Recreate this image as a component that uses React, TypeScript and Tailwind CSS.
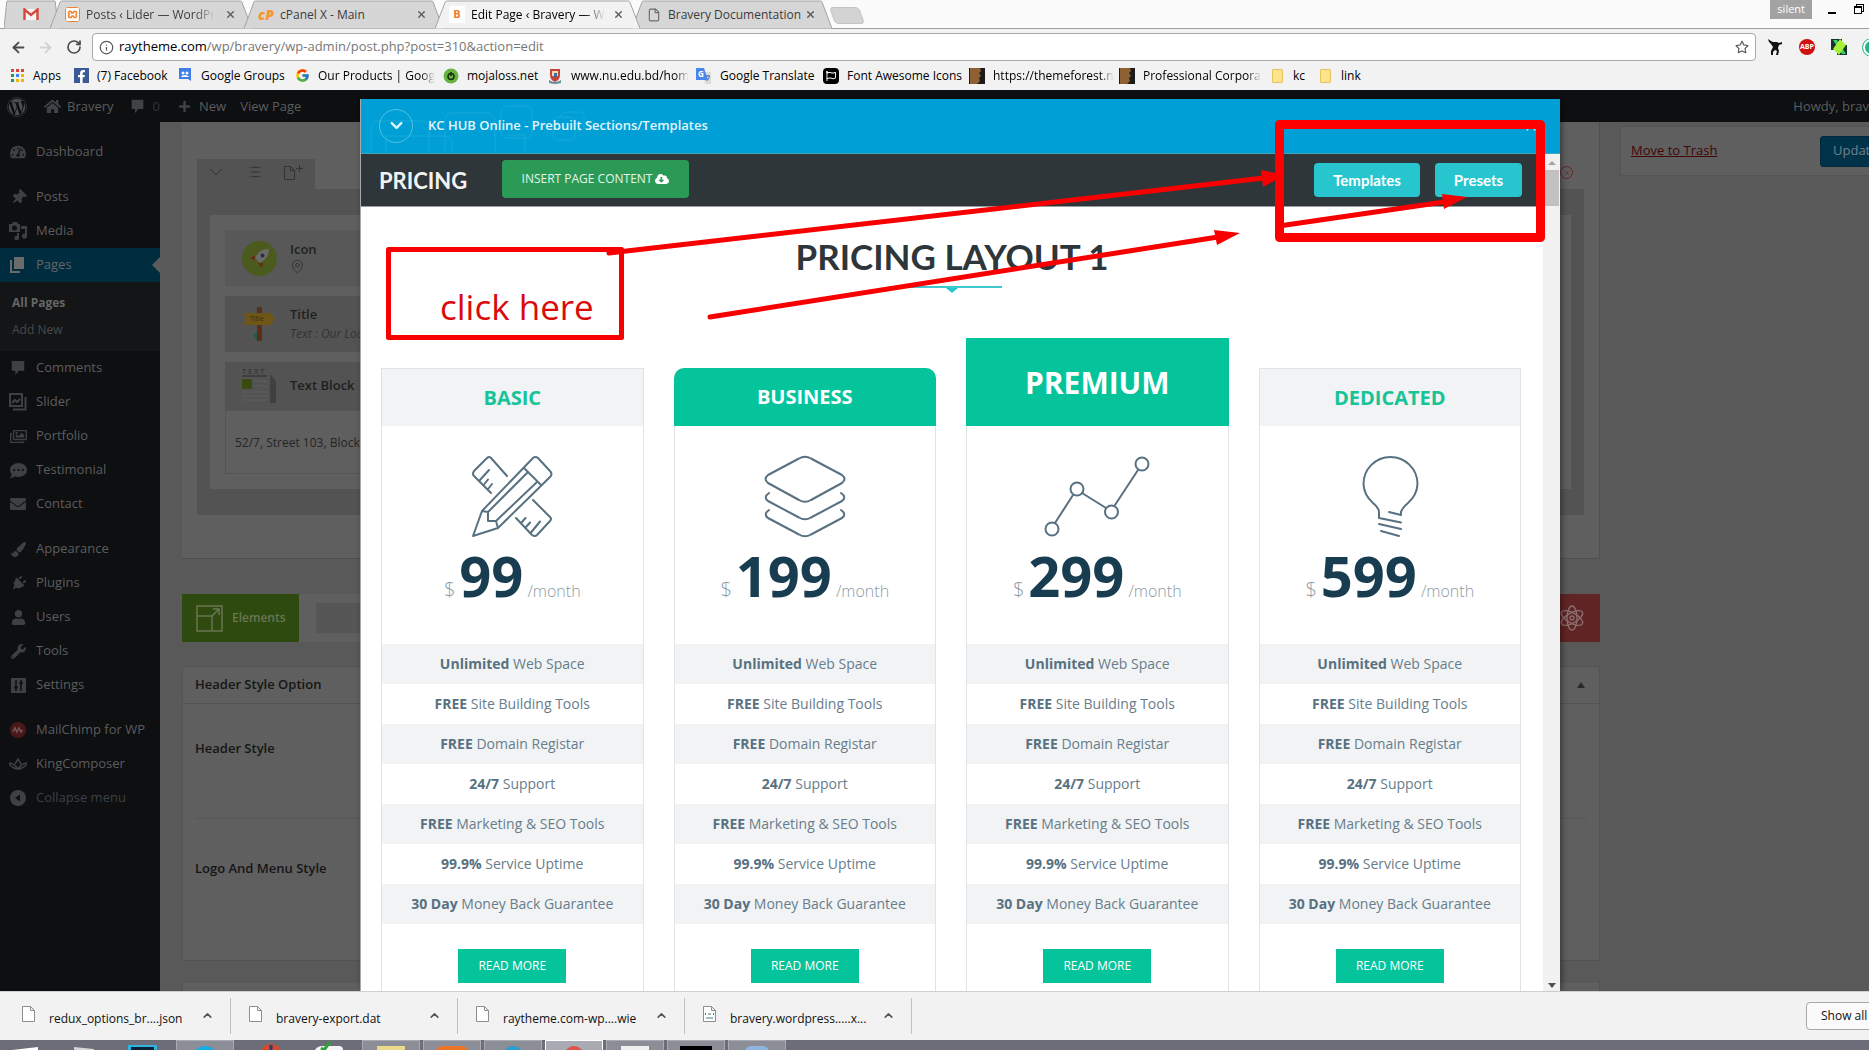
import React from "react";
import {
  FaWordpress,
  FaHome,
  FaPlus,
  FaTachometerAlt,
  FaThumbtack,
  FaWrench,
  FaPlug,
  FaUser,
  FaEnvelope,
  FaPaintBrush,
  FaFacebookF,
  FaCloudDownloadAlt,
  FaRegStar,
  FaCommentDots,
  FaRegImages,
  FaRegFlag,
} from "react-icons/fa";
import { SiXampp } from "react-icons/si";
import { FcGoogle } from "react-icons/fc";
import { ArrowLeft, ArrowRight, RotateCw, Info, ChevronDown, ChevronUp, List, X, File, MapPin } from "lucide-react";

/* ---------- browser chrome ---------- */

function TabShape({ active }: { active?: boolean }) {
  return (
    <svg className="absolute inset-0 h-full w-full" viewBox="0 0 100 29" preserveAspectRatio="none" aria-hidden="true">
      <path
        d="M0 28.5 L5 2 Q5.300 1 6 1 H94 Q94.700 1 95 2 L100 28.500"
        fill={active ? "#f2f2f2" : "#d6d6d6"}
        stroke="#a3a3a3"
        vectorEffect="non-scaling-stroke"
      />
    </svg>
  );
}

function BrowserTab({ icon, label, active, fade, width }: { icon: React.ReactNode; label: string; active?: boolean; fade?: boolean; width: string }) {
  return (
    <div className={`relative h-[29px] -mr-2 ${width} ${active ? "z-10" : ""}`}>
      <TabShape active={active} />
      <div className="relative flex h-full items-center pr-4 pl-[14px]">
        <span className="flex w-4 shrink-0 justify-center">{icon}</span>
        <a
          href="#tab"
          className={`ml-[6px] text-[12px] whitespace-nowrap ${active ? "text-black" : "text-[#3c3c3c]"} ${fade ? "[mask-image:linear-gradient(to_right,black_85%,transparent)]" : ""}`}
        >
          {label}
        </a>
        <button aria-label="Close tab" className="ml-auto shrink-0">
          <X size={11} strokeWidth={3} className="text-[#5a5a5a]" />
        </button>
      </div>
    </div>
  );
}

function TabStrip() {
  return (
    <div className="flex h-[29px] items-start border-b border-[#a0a0a0] bg-[#fbfbfb] pl-1">
      <div className="relative -mr-2 h-[29px] w-[54px]">
        <TabShape />
        <a href="#gmail" aria-label="Gmail" className="relative flex h-full items-center justify-center">
          <svg width="16" height="13" viewBox="0 0 16 13">
            <rect x="1" y="1" width="14" height="11" fill="#f4f4f4" />
            <path d="M1.500 12V1.500L8 7l6.500-5.500V12" fill="none" stroke="#d9473c" strokeWidth="2.400" />
          </svg>
        </a>
      </div>
      <BrowserTab width="w-[202px]" fade label="Posts ‹ Lider — WordPr" icon={<span className="rounded-sm bg-[#ee8433] p-px text-white"><SiXampp size={13} /></span>} />
      <BrowserTab width="w-[199px]" label="cPanel X - Main" icon={<span className="text-[14px] font-extrabold text-[#f79533] italic">cP</span>} />
      <BrowserTab width="w-[205px]" active fade label="Edit Page ‹ Bravery — W" icon={<span className="w-4 bg-white text-center text-[11px] font-bold text-[#f0792e]">B</span>} />
      <BrowserTab width="w-[200px]" label="Bravery Documentation" icon={<File size={14} className="text-[#6c6c6c]" />} />
      <button aria-label="New tab" className="mt-[7px] ml-2 h-[17px] w-[30px] skew-x-[20deg] rounded-sm border border-[#c4c4c4] bg-[#d3d3d3]" />
      <div className="ml-auto flex items-start">
        <span className="h-[19px] bg-[#a3a3a3] px-[7px] text-[11px] leading-[18px] text-white">silent</span>
        <button aria-label="Minimize" className="mt-3 ml-4 h-[2px] w-2 bg-black" />
        <button aria-label="Restore" className="relative mt-1 mr-[5px] ml-[18px] h-[10px] w-[10px]">
          <span className="absolute top-0 right-0 h-2 w-2 border border-black" />
          <span className="absolute bottom-0 left-0 h-2 w-2 border border-t-2 border-black bg-[#fbfbfb]" />
        </button>
      </div>
    </div>
  );
}

function AddressBar() {
  return (
    <div className="flex h-[33px] items-center bg-[#f2f2f2] pt-[3px]">
      <button aria-label="Back" className="ml-[10px] text-[#4a4a4a]"><ArrowLeft size={17} strokeWidth={2.500} /></button>
      <button aria-label="Forward" className="ml-[10px] text-[#d2d2d2]"><ArrowRight size={17} strokeWidth={2.500} /></button>
      <button aria-label="Reload" className="ml-3 text-[#4a4a4a]"><RotateCw size={16} strokeWidth={2.500} /></button>
      <div className="ml-[10px] flex h-[28px] flex-1 items-center gap-[5px] rounded-sm border border-[#a9a9a9] bg-white px-[6px]">
        <Info size={15} className="text-[#5a5a5a]" />
        <a href="#address" className="flex-1 text-[13px] text-[#777]">
          <span className="text-black">raytheme.com</span>/wp/bravery/wp-admin/post.php?post=310&amp;action=edit
        </a>
        <FaRegStar size={14} className="text-[#5a5a5a]" />
      </div>
      <div className="ml-[11px] flex w-[102px] items-center gap-4 overflow-hidden">
        <svg width="16" height="16" viewBox="0 0 16 16" className="shrink-0">
          <path d="M1 0l3 2 2 1 4 0 2 1 3-1v2l-3 1-1 3 1 3-1 4H9l1-4-2-1-2 2 0 3H4l0-4 2-4L4 5 2 3z" fill="#111" />
        </svg>
        <span className="flex size-4 shrink-0 items-center justify-center rounded-full bg-[#cf0f0f] text-[7px] font-bold text-white">ABP</span>
        <svg width="16" height="16" viewBox="0 0 16 16" className="shrink-0">
          <path d="M0 0h11v11H0zM6 6h10v10H6z" fill="#12372a" />
          <path d="M2 1h4l9 14h-4z" fill="#3ccf6b" />
          <path d="M9 0l6 6-7 10-6-6z" fill="#a6ef3a" />
        </svg>
        <span className="size-[17px] shrink-0 rounded-full border-2 border-white bg-[#24b47e] outline outline-[#24b47e]" />
      </div>
    </div>
  );
}

function AppsGrid() {
  const colors = ["#db4437", "#db4437", "#db4437", "#1f9d58", "#4285f4", "#f4b400", "#1f9d58", "#f4b400", "#f4b400"];
  return (
    <span className="grid grid-cols-3 gap-[2px]">
      {colors.map((c, i) => (
        <span key={i} className="size-[3px]" style={{ background: c }} />
      ))}
    </span>
  );
}

function Thumb() {
  return (
    <svg width="16" height="16" viewBox="0 0 16 16">
      <rect width="16" height="16" fill="#1c1a1a" />
      <path d="M1 0h10l1 3-2 2 2 3-2 2 1 3-3 3H1z" fill="#8d6132" />
    </svg>
  );
}

function Folder() {
  return <span className="block h-[14px] w-[11px] rounded-[1px] border border-[#e5c260] bg-[#ffe28c]" />;
}

const bookmarks: { label: string; icon: React.ReactNode; w: string; fade?: boolean }[] = [
  { label: "Apps", icon: <AppsGrid />, w: "w-[64px]" },
  { label: "(7) Facebook", icon: <span className="flex size-[15px] items-end justify-center bg-[#3b5998] text-white"><FaFacebookF size={13} /></span>, w: "w-[104px]" },
  {
    label: "Google Groups",
    icon: (
      <svg width="14" height="15" viewBox="0 0 14 15"><path d="M1 0h12v13l-3-2H1z" fill="#3f7de8" /><circle cx="5" cy="5" r="1.500" fill="#fff" /><circle cx="9" cy="5" r="1.500" fill="#fff" /><path d="M2.500 9q4.500-4 9 0z" fill="#fff" /></svg>
    ),
    w: "w-[117px]",
  },
  { label: "Our Products | Goog", icon: <FcGoogle size={15} />, w: "w-[149px]", fade: true },
  {
    label: "mojaloss.net",
    icon: (
      <svg width="16" height="16" viewBox="0 0 16 16"><circle cx="8" cy="8" r="7.500" fill="#68b442" /><circle cx="8" cy="8.500" r="3" fill="none" stroke="#18310d" strokeWidth="1.500" /><path d="M8 4v4" stroke="#18310d" strokeWidth="1.500" /></svg>
    ),
    w: "w-[104px]",
  },
  {
    label: "www.nu.edu.bd/hom",
    icon: (
      <svg width="14" height="16" viewBox="0 0 14 16"><path d="M2 1h10v6q0 5-5 7-5-2-5-7z" fill="#c4443c" /><path d="M4 3h6v5H4z" fill="#eed9b0" /><path d="M6 5h3v4H6z" fill="#3d6f9c" /><path d="M1 12q6 4 12 0v3q-6 2-12 0z" fill="#6d8f9c" /></svg>
    ),
    w: "w-[149px]",
    fade: true,
  },
  {
    label: "Google Translate",
    icon: (
      <svg width="16" height="16" viewBox="0 0 16 16"><path d="M6 4h9v12H9z" fill="#dcdcdc" /><path d="M0 0h8l4 12H0z" fill="#4a86ec" /><text x="2" y="9" fontSize="8" fontWeight="700" fill="#fff">G</text><path d="M10 8h4M12 7v1M13.500 8q-1 4-3 5" stroke="#4a6fb0" fill="none" /></svg>
    ),
    w: "w-[127px]",
  },
  { label: "Font Awesome Icons", icon: <span className="rounded-sm bg-black p-[3px] text-white"><FaRegFlag size={10} /></span>, w: "w-[146px]" },
  { label: "https://themeforest.n", icon: <Thumb />, w: "w-[150px]", fade: true },
  { label: "Professional Corpora", icon: <Thumb />, w: "w-[150px]", fade: true },
  { label: "kc", icon: <Folder />, w: "w-[48px]" },
  { label: "link", icon: <Folder />, w: "w-[60px]" },
];

function BookmarksBar() {
  return (
    <div className="flex h-[28px] items-center bg-[#f2f2f2] pb-px pl-[9px]">
      {bookmarks.map((b) => (
        <a key={b.label} href="#bookmark" className={`flex items-center gap-2 text-[12px] text-black ${b.w}`}>
          <span className="flex w-4 shrink-0 justify-center">{b.icon}</span>
          <span className={`whitespace-nowrap ${b.fade ? "[mask-image:linear-gradient(to_right,black_88%,transparent)]" : ""}`}>{b.label}</span>
        </a>
      ))}
    </div>
  );
}

/* ---------- WordPress admin ---------- */

function CommentIcon({ size = 15 }: { size?: number }) {
  return (
    <svg width={size} height={size} viewBox="0 0 16 18" fill="currentColor"><path d="M1 1h14v11H9l-4 5v-5H1z" /></svg>
  );
}

function AdminBar() {
  return (
    <header className="flex h-8 shrink-0 items-center bg-[#0d0f11] pt-px text-[13px] text-[#5c5d5e]">
      <FaWordpress size={20} className="ml-[7px] text-[#4a4d50]" />
      <FaHome size={17} className="ml-[17px] text-[#3f4246]" />
      <a href="#site" className="ml-[6px]">Bravery</a>
      <span className="ml-4 text-[#3f4246]"><CommentIcon /></span>
      <a href="#comments" className="ml-2 text-[#333639]">0</a>
      <FaPlus size={13} className="ml-[18px] text-[#3f4246]" />
      <a href="#new" className="ml-2">New</a>
      <a href="#view" className="ml-[14px]">View Page</a>
      <a href="#me" className="ml-auto whitespace-nowrap">Howdy, brav</a>
    </header>
  );
}

const ic = {
  media: <svg width="18" height="18" viewBox="0 0 18 18" fill="currentColor"><path fillRule="evenodd" d="M0 2h3l1-2h4l1 2h2v8H0zM5.500 3.500a2.500 2.500 0 100 5 2.500 2.500 0 000-5z" /><path d="M12 4h6v10a2.500 2.500 0 11-2-2.300V7h-4zM10 11v5a2.300 2.300 0 11-2-2.300V11z" /></svg>,
  pages: <svg width="16" height="18" viewBox="0 0 16 18"><path d="M1 4v12h9" fill="none" stroke="#6b6b6b" strokeWidth="2" /><rect x="4" y="1" width="10" height="12" fill="#6b6b6b" /></svg>,
  slider: <svg width="18" height="18" viewBox="0 0 18 18" fill="none" stroke="currentColor" strokeWidth="2"><rect x="1" y="1" width="12" height="12" /><path d="M4 16.500h12.500V4M3 10l3-3 2 2 3-3" /></svg>,
  settings: <svg width="15" height="15" viewBox="0 0 15 15"><rect width="15" height="15" fill="currentColor" /><path d="M5 2v11M3 9.500h4M10 2v11M8 5h4" stroke="#0d0f11" strokeWidth="1.500" /></svg>,
  mail: <svg width="16" height="16" viewBox="0 0 16 16"><circle cx="8" cy="8" r="8" fill="#4c1719" /><path d="M3 10l2-4 2 4 2-4 2 4 1.500-2" fill="none" stroke="#70585a" strokeWidth="1.500" /></svg>,
  king: <svg width="18" height="12" viewBox="0 0 18 12" fill="none" stroke="currentColor" strokeWidth="1.500"><path d="M0 5q2 5 9 6 7-1 9-6-5 0-9 6Q5 5 0 5zM6 6l3-5 3 5" /></svg>,
  collapse: <svg width="16" height="16" viewBox="0 0 16 16"><circle cx="8" cy="8" r="8" fill="currentColor" /><path d="M10 4.500v7L5 8z" fill="#0d0f11" /></svg>,
};

type Item = { label: string; icon: React.ReactNode; gap?: boolean };
const menuTop: Item[] = [
  { label: "Dashboard", icon: <FaTachometerAlt size={16} /> },
  { label: "Posts", icon: <FaThumbtack size={15} className="rotate-45" />, gap: true },
  { label: "Media", icon: ic.media },
];
const menuBottom: Item[] = [
  { label: "Comments", icon: <CommentIcon size={16} /> },
  { label: "Slider", icon: ic.slider },
  { label: "Portfolio", icon: <FaRegImages size={17} /> },
  { label: "Testimonial", icon: <FaCommentDots size={17} /> },
  { label: "Contact", icon: <FaEnvelope size={16} /> },
  { label: "Appearance", icon: <FaPaintBrush size={15} />, gap: true },
  { label: "Plugins", icon: <FaPlug size={15} className="rotate-45" /> },
  { label: "Users", icon: <FaUser size={15} /> },
  { label: "Tools", icon: <FaWrench size={15} /> },
  { label: "Settings", icon: ic.settings },
  { label: "MailChimp for WP", icon: ic.mail, gap: true },
  { label: "KingComposer", icon: ic.king },
];

function MenuLink({ item }: { item: Item }) {
  return (
    <a href="#menu" className={`flex h-[34px] items-center text-[13px] whitespace-nowrap text-[#5c5d5e] ${item.gap ? "mt-[11px]" : ""}`}>
      <span className="flex w-9 shrink-0 justify-center text-[#3e4144]">{item.icon}</span>
      {item.label}
    </a>
  );
}

function Sidebar() {
  return (
    <nav className="w-[160px] shrink-0 bg-[#0d0f11] pt-[13px]">
      {menuTop.map((m) => <MenuLink key={m.label} item={m} />)}
      <a href="#pages" className="relative flex h-[34px] items-center bg-[#002c40] text-[13px] text-[#666]">
        <span className="flex w-9 justify-center">{ic.pages}</span>
        Pages
        <span className="absolute top-[9px] right-0 border-y-8 border-r-8 border-y-transparent border-r-[#5b5b5b]" />
      </a>
      <div className="flex h-[69px] flex-col justify-center gap-[7px] bg-[#131517] pl-3 text-[12px] leading-5">
        <a href="#all" className="font-bold text-[#666]">All Pages</a>
        <a href="#add" className="text-[#484a4c]">Add New</a>
      </div>
      {menuBottom.map((m) => <MenuLink key={m.label} item={m} />)}
      <button className="flex h-[34px] items-center text-[13px] text-[#3e4144]">
        <span className="flex w-9 justify-center">{ic.collapse}</span>
        Collapse menu
      </button>
    </nav>
  );
}

function EditorPanel() {
  return (
    <section className="h-[437px] border-r border-b border-[#4f4f4f] bg-[#5f5f5f] px-[15px] pt-[37px]">
      <div className="flex h-[30px] w-[118px] items-center justify-between bg-[#535353] px-3 pb-1 text-[#333]">
        <svg width="14" height="8" viewBox="0 0 14 8" fill="none" stroke="currentColor"><path d="M1 1l6 6 6-6" /></svg>
        <List size={16} strokeWidth={1.500} />
        <svg width="19" height="15" viewBox="0 0 19 15" fill="none" stroke="currentColor"><path d="M.500 1.500h6l4 4v9H.500zM6.500 1.500v4h4M15.500 0v7M12 3.500h7" /></svg>
      </div>
      <div className="relative bg-[#535353] px-[13px] py-[26px]">
        <span className="absolute -top-[23px] right-[11px] flex size-[13px] items-center justify-center rounded-full border border-[#6a2327] text-[#6a2327]"><X size={8} /></span>
        <div className="h-[274px] bg-[#5f5f5f] px-[15px] pt-[15px] text-[#1f1f1f]">
          <article className="flex h-[56px] items-center gap-[13px] bg-[#585858] pl-[17px]">
            <svg width="35" height="35" viewBox="0 0 35 35">
              <circle cx="17.500" cy="17.500" r="17.500" fill="#4b5a1d" />
              <path d="M27 8q-9-1-14 9l5 5q9-5 9-14z" fill="#6b6b6b" />
              <path d="M13 14l-5 3 5 2zM16 22l5 0-1 5z" fill="#642b1c" />
              <circle cx="20.500" cy="14.500" r="2" fill="#24303d" />
            </svg>
            <div className="flex flex-col pb-[3px]">
              <h3 className="text-[13px] leading-5 font-semibold">Icon</h3>
              <MapPin size={15} strokeWidth={1.500} className="text-[#333]" />
            </div>
          </article>
          <article className="mt-[10px] flex h-[56px] items-center gap-[13px] bg-[#535353] pl-[17px]">
            <svg width="35" height="35" viewBox="0 0 35 35">
              <rect x="15" y="0" width="5" height="34" fill="#5a2f17" />
              <path d="M1 6h28l4 6-4 6H1l3-6z" fill="#6e5618" />
              <path d="M11 28l4-2v8z" fill="#1c5a4a" />
              <text x="8" y="14" fontSize="7" fill="#3b2e10">Title</text>
            </svg>
            <div>
              <h3 className="text-[13px] leading-5 font-semibold">Title</h3>
              <p className="text-[12px] leading-5 whitespace-nowrap text-[#333] italic">Text : Our Loc</p>
            </div>
          </article>
          <article className="mt-[10px] flex h-[48px] items-center gap-[13px] bg-[#535353] pl-[17px]">
            <svg width="35" height="38" viewBox="0 0 35 38">
              <text x="0" y="7" fontSize="8" letterSpacing="1.500" fill="#2c2c2c">TEXT</text>
              <path d="M0 9h25" stroke="#2c2c2c" />
              <rect x="0" y="12" width="10" height="10" fill="#3a4b12" />
              <path d="M12 14h13M12 19h13M0 25h25M0 29h25M0 33h25" stroke="#5e5e5e" />
              <path d="M28 7l6 7v22h-6z" fill="#404040" />
            </svg>
            <h3 className="text-[13px] font-semibold">Text Block</h3>
          </article>
          <p className="h-[64px] w-full border border-[#555] pt-[23px] pl-[9px] text-[12px] text-[#252525]">52/7, Street 103, Block</p>
        </div>
      </div>
    </section>
  );
}

function EditorArea() {
  return (
    <main className="min-w-0 flex-1 overflow-hidden bg-[#595959] pl-[22px]">
      <EditorPanel />
      <div className="mt-[35px] flex h-[48px] items-center bg-[#5f5f5f]">
        <button className="flex h-full w-[117px] items-center gap-[9px] bg-[#2f4a0f] pl-[14px] text-[12px] font-semibold text-[#687653]">
          <svg width="27" height="27" viewBox="0 0 27 27" fill="none" stroke="#687653" strokeWidth="1.500">
            <path d="M1 11V1h25v25h-9M1 11h15v15H1zM16 11l7-7M17 4h6v6" />
          </svg>
          Elements
        </button>
        <span className="ml-[17px] h-[30px] flex-1 bg-[#565656]" />
        <button aria-label="Presets" className="flex h-full w-[57px] items-center justify-center bg-[#602425]">
          <svg width="26" height="26" viewBox="0 0 26 26" fill="none" stroke="#8c6f6e" strokeWidth="1.300">
            <ellipse cx="13" cy="13" rx="5" ry="12" />
            <ellipse cx="13" cy="13" rx="5" ry="12" transform="rotate(60 13 13)" />
            <ellipse cx="13" cy="13" rx="5" ry="12" transform="rotate(120 13 13)" />
            <circle cx="13" cy="13" r="2" />
          </svg>
        </button>
      </div>
      <section className="mt-6 h-[295px] border border-[#535353] bg-[#5f5f5f] text-[13px] font-semibold text-[#151515]">
        <h2 className="flex h-[37px] items-center justify-between border-b border-[#535353] pr-[14px] pl-3">
          Header Style Option
          <span className="border-x-4 border-b-[6px] border-x-transparent border-b-[#292929]" />
        </h2>
        <div className="mx-3 flex h-[115px] items-center border-b border-[#565656] pb-6">Header Style</div>
        <div className="mx-3 flex h-[100px] items-center">Logo And Menu Style</div>
      </section>
      <section className="mt-5 h-10 border border-[#535353] bg-[#5f5f5f]" />
    </main>
  );
}

function PublishColumn() {
  return (
    <aside className="w-[269px] shrink-0 overflow-hidden bg-[#595959] pl-5">
      <div className="mt-1 flex h-[50px] w-[282px] items-center justify-between border border-[#545454] bg-[#5f5f5f] px-[10px] text-[13px]">
        <a href="#trash" className="text-[#430505] underline">Move to Trash</a>
        <button className="h-[31px] w-[71px] rounded-[3px] border border-[#002a3c] bg-[#00334a] pl-3 text-left text-[#71818a]">Updat</button>
      </div>
    </aside>
  );
}

/* ---------- pricing modal ---------- */

const iconProps = {
  width: 84,
  height: 84,
  viewBox: "0 0 84 84",
  fill: "none",
  stroke: "#587181",
  strokeWidth: 2,
  strokeLinejoin: "round" as const,
  strokeLinecap: "round" as const,
  className: "overflow-visible",
};

const planIcons = {
  tools: (
    <svg {...iconProps}>
      <path d="M37 21L21 3Q19 1 17 3L4 16Q2 19 4 21L21 38M10 25l9-10M14.500 29l3.500-4.500M18.500 33.500l3.500-4.500" />
      <path d="M63 45l17 17Q82 64 80 66L67 80Q65 82 62 80L46 63M56 72l4-4.500M51.500 67.500l4-4.500M61 77.500l9-11" />
      <path d="M12 56L63 3Q65.500 1 68 3L80 16Q83 19 80 22L28 73L3 81zM54 13L70 29M58 17L18 57M67 27L26 66M12 56l6 1v9h8l2 7" fill="#fff" />
    </svg>
  ),
  layers: (
    <svg {...iconProps}>
      <path d="M36 3.500Q42 0 48 3.500L79 20Q84 24 79 28L48 45Q42 48.500 36 45L5 28Q0 24 5 20z" />
      <path d="M6 38Q0 42 5 46L36 62.500Q42 66 48 62.500L79 46Q84 42 78 38" />
      <path d="M6 55Q0 59 5 63L36 79.500Q42 83 48 79.500L79 63Q84 59 78 55" />
    </svg>
  ),
  chart: (
    <svg {...iconProps}>
      <path d="M0 68L18 40M27 38l24 15M60 50L83 15" />
      <circle cx="-3" cy="74" r="6.500" />
      <circle cx="22" cy="34" r="6.500" />
      <circle cx="56.500" cy="57" r="6.500" />
      <circle cx="87" cy="9" r="6.500" />
    </svg>
  ),
  bulb: (
    <svg {...iconProps}>
      <path d="M41 57l12 3V57Q54 53 60 48 69 40 69.500 29A27 27 0 0015.500 29Q16 40 25 48 31 53 31 57v6l22 4.500M31 69l22 5M33 76l18 5" />
    </svg>
  ),
};

const plans: { name: string; price: string; icon: React.ReactNode; head: string }[] = [
  { name: "BASIC", price: "99", icon: planIcons.tools, head: "h-[58px] border border-b-0 border-[#dfe3e5] bg-[#f1f3f5] text-[20px] text-[#17c497]" },
  { name: "BUSINESS", price: "199", icon: planIcons.layers, head: "h-[58px] rounded-t-[10px] bg-[#05c49b] text-[20px] text-white" },
  { name: "PREMIUM", price: "299", icon: planIcons.chart, head: "h-[88px] bg-[#05c49b] text-[30px] text-white" },
  { name: "DEDICATED", price: "599", icon: planIcons.bulb, head: "h-[58px] border border-b-0 border-[#dfe3e5] bg-[#f1f3f5] text-[20px] text-[#17c497]" },
];

const features = [
  ["Unlimited", "Web Space"],
  ["FREE", "Site Building Tools"],
  ["FREE", "Domain Registar"],
  ["24/7", "Support"],
  ["FREE", "Marketing & SEO Tools"],
  ["99.9%", "Service Uptime"],
  ["30 Day", "Money Back Guarantee"],
];

function PlanCard({ plan }: { plan: (typeof plans)[number] }) {
  return (
    <article className="text-center">
      <h3 className={`flex items-center justify-center font-bold ${plan.head}`}>{plan.name}</h3>
      <div className="border-x border-[#dfe3e5]">
        <div className="flex h-[218px] flex-col items-center pt-[29px]">
          {plan.icon}
          <p className="mt-1 text-[#8c9aa4]">
            <span className="text-[20px] font-light">$</span>
            <span className="mx-1 text-[56px] leading-[64px] font-bold text-[#183d50]">{plan.price}</span>
            <span className="text-[16px] font-light">/month</span>
          </p>
        </div>
        <ul className="text-[14px] leading-10 text-[#687d8b]">
          {features.map(([b, t]) => (
            <li key={b + t} className="h-10 whitespace-nowrap odd:bg-[#f1f3f5]">
              <b className="text-[#587181]">{b}</b> {t}
            </li>
          ))}
        </ul>
        <div className="flex h-[80px] justify-center pt-[25px]">
          <button className="h-[34px] w-[108px] bg-[#05c49b] text-[12px] text-white">READ MORE</button>
        </div>
      </div>
    </article>
  );
}

function PricingModal() {
  return (
    <div role="dialog" aria-label="KC HUB Online" className="absolute top-[9px] right-[309px] bottom-0 left-[360px] flex flex-col border-l border-[#a9a9a9] bg-white shadow-[2px_0_6px_rgba(0,0,0,0.4)]">
      <div className="relative flex h-[55px] shrink-0 items-center border-b border-[#41a5bd] bg-[#00a0d6] pb-px pl-[18px]">
        <svg className="absolute top-0 left-0" width="230" height="53" viewBox="0 0 230 53" fill="none" stroke="#18a9da" aria-hidden="true">
          <path d="M10 53V30q0-8 8-8h42q8 0 8 8v23M25 53V37h58q8 0 8 8v8M84 53V22q0-8 8-8h34q8 0 8 8v31" />
          <rect x="140" y="7" width="31" height="32" rx="6" />
          <rect x="192" y="18" width="22" height="23" rx="5" />
          <path d="M146 36h18v17M200 18q0-5 6-5h12q5 0 5 5v10q0 4-6 4" />
        </svg>
        <button aria-label="Collapse" className="relative flex size-[34px] items-center justify-center rounded-full border border-[#4fc0e4] text-[#dff4fb]">
          <ChevronDown size={19} strokeWidth={3} />
        </button>
        <h1 className="relative ml-[15px] text-[13px] font-semibold text-[#e2f6fd]">KC HUB Online - Prebuilt Sections/Templates</h1>
        <button aria-label="Close" className="ml-auto mr-[21px] text-[#bfe6f5]"><X size={16} /></button>
      </div>
      <div className="flex min-h-0 flex-1">
        <div className="min-w-0 flex-1 overflow-hidden">
          <div className="flex h-[53px] items-center border-b border-[#9a9d9f] bg-[#2f363a] pr-[21px] pl-[18px] font-['Lato']">
            <h2 className="w-[123px] text-[22px] font-bold text-[#f1f3f3]">PRICING</h2>
            <button className="mb-[2px] flex h-[38px] w-[187px] items-center justify-center gap-[3px] rounded-sm bg-[#2c9a57] pb-px font-['Open_Sans'] text-[12px] text-[#e3f7ea]">
              INSERT PAGE CONTENT <FaCloudDownloadAlt size={14} className="text-white" />
            </button>
            <button className="ml-auto h-[34px] w-[106px] rounded-sm bg-[#27c6cf] text-[15px] font-bold text-white">Templates</button>
            <button className="ml-[15px] h-[34px] w-[87px] rounded-sm bg-[#27c6cf] text-[15px] font-bold text-white">Presets</button>
          </div>
          <h2 className="mt-6 text-center font-['Lato'] text-[35px] leading-[50px] font-bold text-[#2f363a]">PRICING LAYOUT 1</h2>
          <div className="mx-auto mt-[5px] flex h-[52px] w-[100px] flex-col items-center border-t-2 border-[#3fc8ce]">
            <span className="border-x-[6px] border-t-[5px] border-x-transparent border-t-[#27c6cf]" />
          </div>
          <div className="grid grid-cols-4 items-end gap-[30px] pr-[22px] pl-5">
            {plans.map((p) => <PlanCard key={p.name} plan={p} />)}
          </div>
        </div>
        <div className="flex w-[17px] shrink-0 flex-col items-center bg-[#f1f1f1] pt-[7px] pb-[3px]" aria-hidden="true">
          <span className="border-x-4 border-b-4 border-x-transparent border-b-[#a3a3a3]" />
          <span className="mt-[5px] h-9 w-[15px] bg-[#c1c1c1]" />
          <span className="mt-auto border-x-4 border-t-[5px] border-x-transparent border-t-[#505050]" />
        </div>
      </div>
    </div>
  );
}

/* ---------- hand-drawn annotations ---------- */

function Annotations() {
  return (
    <div className="pointer-events-none absolute top-0 left-0 z-20 h-full w-full overflow-hidden">
      <svg className="absolute top-0 left-0 h-full w-full" fill="none" stroke="#f90000">
        <rect x="388.500" y="249.500" width="233" height="88" strokeWidth="5" strokeLinejoin="round" />
        <rect x="1279.500" y="124.500" width="261" height="113" strokeWidth="9" strokeLinejoin="round" stroke="#fe0000" />
        <path d="M609 253L1264 178M710 317L1218 237" strokeWidth="5" strokeLinecap="round" />
        <path d="M1279 226L1444 202" strokeWidth="5" strokeLinecap="round" />
        <path d="M1261 170l24 5-22 12zM1214 230l26 3-23 12zM1442 194l25 3-23 12z" fill="#f90000" stroke="none" />
      </svg>
      <span className="absolute top-[280px] left-[440px] text-[35px] leading-[54px] text-[#d90b0b]">click here</span>
    </div>
  );
}

/* ---------- downloads and taskbar ---------- */

function DownloadBar() {
  const files = ["redux_options_br....json", "bravery-export.dat", "raytheme.com-wp....wie", "bravery.wordpress.....x..."];
  return (
    <footer className="flex h-[49px] shrink-0 items-center overflow-hidden border-t border-[#cfcfcf] bg-[#f2f2f2] pl-1">
      {files.map((f, i) => (
        <a key={f} href="#download" className="flex h-9 w-[227px] shrink-0 items-center border-r border-[#c0c0c0] pr-4 pl-[18px] text-[12px] text-[#111]">
          <svg width="13" height="16" viewBox="0 0 13 16" className="mb-1 shrink-0">
            <path d="M.5.5h8l4 4v11H.500zM8.500.500v4h4" fill="#fff" stroke="#8e8e8e" />
            {i === 3 && <path d="M3 7l-1 1 1 1M10 7l1 1-1 1M5 8h3M3 12h7" stroke="#3b7d8c" fill="none" />}
          </svg>
          <span className="ml-[14px] pt-[5px] whitespace-nowrap">{f}</span>
          <ChevronUp size={13} strokeWidth={3} className="mb-px ml-auto text-[#555]" />
        </a>
      ))}
      <button className="-mr-10 ml-auto h-[28px] w-[103px] shrink-0 rounded-sm border border-[#a8a8a8] bg-[#fafafa] pl-[14px] text-left text-[12px] font-medium text-[#111]">Show all</button>
    </footer>
  );
}

function TaskBar() {
  const slot = "flex h-[14px] w-[58px] shrink-0 justify-center border border-[#a9abb3] bg-[#8b8d97] pt-[5px]";
  return (
    <div className="flex h-[10px] shrink-0 items-start gap-[3px] overflow-hidden bg-[#6b6d79]" aria-hidden="true">
      <svg width="173" height="10" viewBox="0 0 173 10" className="shrink-0">
        <path d="M12 10l26-3v3z" fill="#fff" />
        <path d="M74 7l20 2v1H74z" fill="#d5d5d5" />
        <rect x="128" y="5" width="29" height="6" fill="#2fb4e0" />
        <rect x="131" y="7" width="23" height="4" fill="#0b2236" />
      </svg>
      <span className={slot}><span className="h-3 w-6 rounded-t-full bg-[#13aee8]" /></span>
      <svg width="122" height="10" viewBox="0 0 122 10" className="shrink-0">
        <circle cx="34" cy="15" r="11" fill="#d6492c" />
        <path d="M34 5v5" stroke="#203f78" strokeWidth="3" />
        <path d="M78 10q2-4 8-4h16q4 0 4 4z" fill="#f4f4f4" />
        <path d="M84 8l3 2 6-8" stroke="#2fa13a" strokeWidth="3" fill="none" />
      </svg>
      <span className={slot}><span className="h-3 w-7 bg-[#ecd98c]" /></span>
      <span className={slot}><span className="h-3 w-8 rounded-t-md bg-[#ec7627]" /></span>
      <span className={slot}><span className="h-3 w-5 rounded-t-full bg-[#2a9ed0]" /></span>
      <span className="flex h-[14px] w-[58px] shrink-0 justify-center border border-white bg-[#a9abb3] pt-[5px]"><span className="h-3 w-5 rounded-t-full bg-[#dc5549]" /></span>
      <span className={slot}><span className="h-3 w-7 bg-[#efefef]" /></span>
      <span className={slot}><span className="h-3 w-8 bg-black" /></span>
      <span className={slot}><span className="h-3 w-6 rounded-t-md bg-[#8fb4de]" /></span>
    </div>
  );
}

export default function App() {
  return (
    <div className="relative flex h-screen flex-col overflow-hidden bg-[#0d0f11] font-['Open_Sans',sans-serif]">
      <div className="shrink-0 bg-[#f2f2f2]">
        <TabStrip />
        <AddressBar />
        <BookmarksBar />
      </div>
      <div className="relative flex min-h-0 flex-1 flex-col overflow-hidden">
        <AdminBar />
        <div className="flex min-h-0 flex-1">
          <Sidebar />
          <EditorArea />
          <PublishColumn />
        </div>
        <PricingModal />
      </div>
      <DownloadBar />
      <TaskBar />
      <Annotations />
    </div>
  );
}
